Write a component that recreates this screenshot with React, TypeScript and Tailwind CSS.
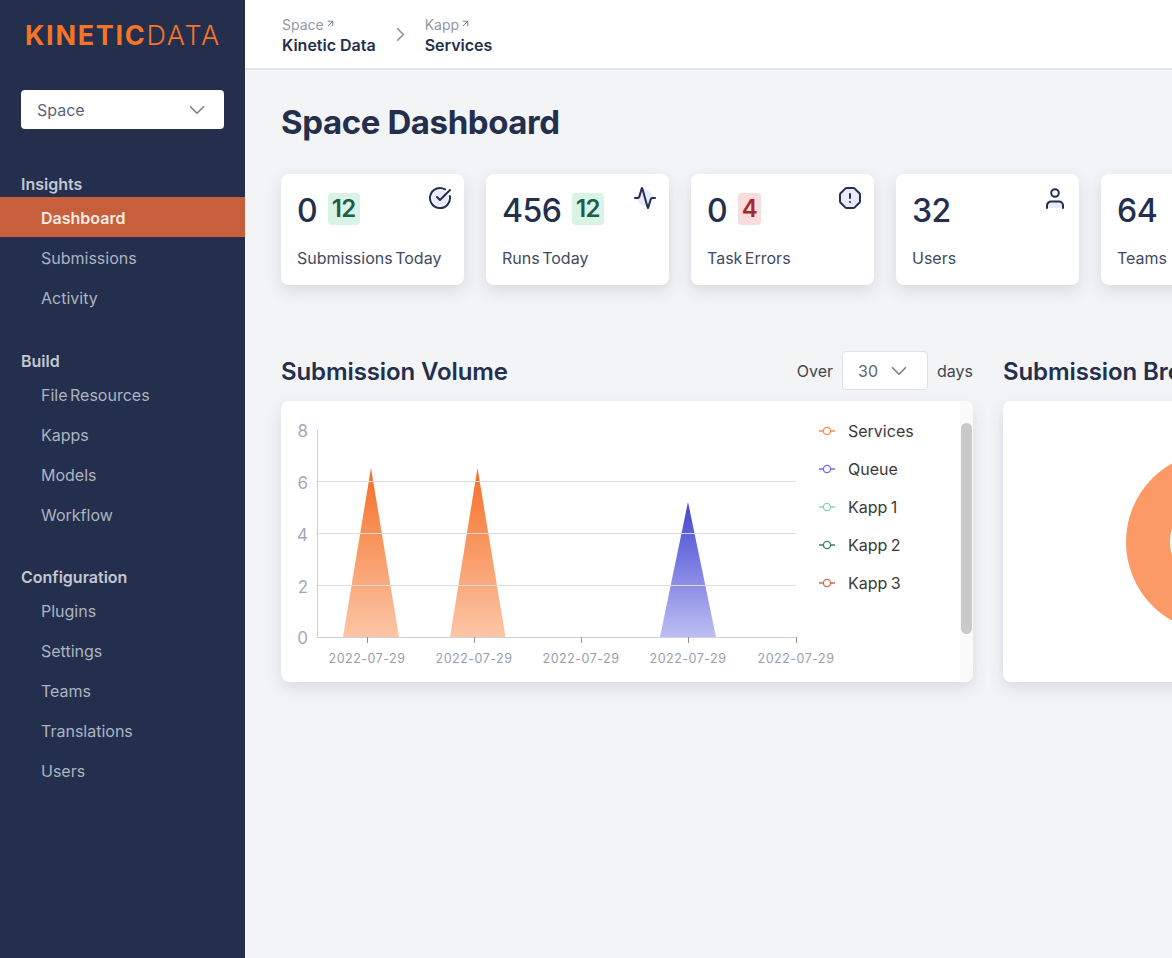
import { Activity, ArrowUpRight, ChevronDown, ChevronRight, CircleCheckBig } from 'lucide-react';
import React from 'react';

const font = "font-['Inter','Liberation_Sans',sans-serif]";

const sections = [
    { title: 'Insights', items: ['Dashboard', 'Submissions', 'Activity'] },
    { title: 'Build', items: ['File Resources', 'Kapps', 'Models', 'Workflow'] },
    { title: 'Configuration', items: ['Plugins', 'Settings', 'Teams', 'Translations', 'Users'] },
];

const legend = [
    { label: 'Services', color: '#fb8a4e' },
    { label: 'Queue', color: '#6a6fe6' },
    { label: 'Kapp 1', color: '#8fd3ae' },
    { label: 'Kapp 2', color: '#3f7d6c' },
    { label: 'Kapp 3', color: '#cf6a4c' },
];

const ticks = [367, 474, 581, 688, 796];

function Sidebar() {
    return (
        <aside className="w-[245px] shrink-0 bg-[#232f4d]">
            <div className="h-[70px] pl-[25px] pt-[20px] text-[27px] leading-[32px] tracking-[1.7px] text-[#f47428]">
                <span className="font-bold">KINETIC</span>
                <span className="font-light">DATA</span>
            </div>
            <div className="mx-[21px] mt-[20px] flex h-[39px] w-[203px] items-center justify-between rounded-[4px] bg-white pl-[16px] pr-[14px] text-[16px] text-[#5b6478]">
                Space
                <ChevronDown size={26} strokeWidth={1.6} className="text-[#7c8494]" />
            </div>
            <nav className="mt-[42px]">
                {sections.map(section => (
                    <div key={section.title} className="mb-[30.5px]">
                        <div className="flex h-[26px] items-center pl-[21px] text-[16px] font-semibold text-[#c3c7d1]">
                            {section.title}
                        </div>
                        {section.items.map(item => (
                            <div
                                key={item}
                                className={
                                    item === 'Dashboard'
                                        ? 'flex h-[40px] items-center bg-[#c85f3c] pl-[41px] pt-[2px] text-[16px] font-semibold text-[#f8ebe5] [word-spacing:-2px]'
                                        : 'flex h-[40px] items-center pl-[41px] pt-[2px] text-[16px] text-[#aeb3c0] [word-spacing:-2px]'
                                }
                            >
                                {item}
                            </div>
                        ))}
                    </div>
                ))}
            </nav>
        </aside>
    );
}

function Crumb({ top, bottom }: { top: string; bottom: string }) {
    return (
        <div>
            <div className="flex items-center gap-[1px] text-[14px] leading-[20px] text-[#9299a8]">
                {top}
                <ArrowUpRight size={11} strokeWidth={2} className="mb-[3px] text-[#6f7686]" />
            </div>
            <div className="text-[16px] font-semibold leading-[20px] text-[#232f4d]">{bottom}</div>
        </div>
    );
}

function Badge({ value, tone }: { value: string; tone: 'green' | 'red' }) {
    return (
        <span
            className={
                tone === 'green'
                    ? '-mt-[4px] flex h-[32px] items-center rounded-[4px] bg-[#d9f4e4] px-[4px] text-[24px] font-semibold tracking-[-0.5px] text-[#1f5c4d]'
                    : '-mt-[4px] flex h-[32px] items-center rounded-[4px] bg-[#f9dcdc] px-[4px] text-[24px] font-semibold text-[#a8262c]'
            }
        >
            {value}
        </span>
    );
}

function Stat({ value, label, badge, icon }: { value: string; label: string; badge?: React.ReactNode; icon: React.ReactNode }) {
    return (
        <div className="relative h-[111px] w-[183px] shrink-0 rounded-[8px] bg-white pl-[16px] pt-[19px] shadow-[0_6px_16px_rgba(35,47,77,0.13)]">
            <div className="flex h-[36px] items-center gap-[10.5px] text-[32px] font-medium tracking-[-0.5px] text-[#232f4d]">
                {value}
                {badge}
            </div>
            <div className="mt-[17px] text-[16px] leading-[24px] text-[#414a63] [word-spacing:-2px]">{label}</div>
            <div className="absolute right-[12px] top-[12px]">{icon}</div>
        </div>
    );
}

function LavenderDot({ children }: { children: React.ReactNode }) {
    return (
        <div className="relative h-[24px] w-[24px] text-[#232f4d]">
            <div className="absolute left-[4px] top-[4px] h-[16px] w-[16px] rounded-full bg-[#e9ebfb]" />
            <div className="relative">{children}</div>
        </div>
    );
}

function OctagonIcon() {
    return (
        <svg width={24} height={24} viewBox="0 0 24 24" className="text-[#232f4d]" fill="none" stroke="currentColor" strokeWidth={2} strokeLinecap="round" strokeLinejoin="round">
            <path
                d="M15.312 2a2 2 0 0 1 1.414.586l4.688 4.688A2 2 0 0 1 22 8.688v6.624a2 2 0 0 1-.586 1.414l-4.688 4.688a2 2 0 0 1-1.414.586H8.688a2 2 0 0 1-1.414-.586l-4.688-4.688A2 2 0 0 1 2 15.312V8.688c0-.53.211-1.039.586-1.414l4.688-4.688A2 2 0 0 1 8.688 2z"
                fill="#e9ebfb"
            />
            <path d="M12 8v4" />
            <path d="M12 16h.01" />
        </svg>
    );
}

function UserIcon() {
    return (
        <svg width={24} height={24} viewBox="0 0 24 24" className="text-[#232f4d]" fill="none" stroke="currentColor" strokeWidth={2} strokeLinecap="round">
            <path d="M4 22v-2.5a4 4 0 0 1 4-4h8a4 4 0 0 1 4 4V22" fill="#e9ebfb" stroke="none" />
            <path d="M4 22v-2.5a4 4 0 0 1 4-4h8a4 4 0 0 1 4 4V22" />
            <circle cx={12} cy={7} r={3.8} />
        </svg>
    );
}

function VolumeChart() {
    return (
        <svg width={530} height={281} viewBox="0 0 530 281" className="shrink-0 overflow-visible">
            <defs>
                <linearGradient id="orange" x1="0" y1="0" x2="0" y2="1">
                    <stop offset="0" stopColor="#f56f25" />
                    <stop offset="1" stopColor="#fcc6a6" />
                </linearGradient>
                <linearGradient id="blue" x1="0" y1="0" x2="0" y2="1">
                    <stop offset="0" stopColor="#4143d2" />
                    <stop offset="1" stopColor="#bcbef2" />
                </linearGradient>
            </defs>
            <polygon points="62,236 90,67 118,236" fill="url(#orange)" />
            <polygon points="169,236 196.5,67 224.5,236" fill="url(#orange)" />
            <polygon points="379,236 407,101 435,236" fill="url(#blue)" />
            {[80.5, 132.5, 184.5].map(y => (
                <line key={y} x1={36} x2={515} y1={y} y2={y} stroke="#dcdcdf" strokeWidth={1} />
            ))}
            <line x1={36.5} x2={36.5} y1={29} y2={236} stroke="#d0d1d6" strokeWidth={1} />
            <line x1={36} x2={515} y1={236.5} y2={236.5} stroke="#d0d1d6" strokeWidth={1} />
            {ticks.map(x => (
                <line key={x} x1={x - 280.5} x2={x - 280.5} y1={236} y2={242} stroke="#8b8f9c" strokeWidth={1} />
            ))}
            {[['8', 30], ['6', 82], ['4', 134], ['2', 186], ['0', 237]].map(([t, y]) => (
                <text key={t} x={27} y={Number(y) + 6} textAnchor="end" fontSize={17} fill="#a5a9b7">
                    {t}
                </text>
            ))}
            {ticks.map(x => (
                <text key={x} x={x - 281} y={262} textAnchor="middle" fontSize={12.5} letterSpacing={0.5} fill="#9a9eac">
                    2022-07-29
                </text>
            ))}
        </svg>
    );
}

export default function App() {
    return (
        <div className={`${font} flex h-[958px] w-[1172px] overflow-hidden bg-[#f3f4f6]`}>
            <Sidebar />
            <main className="min-w-0 flex-1">
                <header className="flex h-[70px] items-center gap-[13px] border-b-2 border-[#e4e5e8] bg-white pl-[37px] pt-[1px]">
                    <Crumb top="Space" bottom="Kinetic Data" />
                    <ChevronRight size={23} strokeWidth={1.8} className="text-[#8d94a3]" />
                    <Crumb top="Kapp" bottom="Services" />
                </header>
                <div className="pl-[36px]">
                    <h1 className="mt-[32px] text-[33px] font-bold leading-[40px] tracking-[-0.4px] text-[#232f4d]">Space Dashboard</h1>
                    <div className="mt-[32px] flex gap-[22px]">
                        <Stat
                            value="0"
                            label="Submissions Today"
                            badge={<Badge value="12" tone="green" />}
                            icon={
                                <LavenderDot>
                                    <CircleCheckBig size={24} strokeWidth={2} />
                                </LavenderDot>
                            }
                        />
                        <Stat
                            value="456"
                            label="Runs Today"
                            badge={<Badge value="12" tone="green" />}
                            icon={
                                <LavenderDot>
                                    <Activity size={24} strokeWidth={2} />
                                </LavenderDot>
                            }
                        />
                        <Stat value="0" label="Task Errors" badge={<Badge value="4" tone="red" />} icon={<OctagonIcon />} />
                        <Stat value="32" label="Users" icon={<UserIcon />} />
                        <Stat value="64" label="Teams" icon={<UserIcon />} />
                    </div>
                    <div className="mt-[66px] flex gap-[30px]">
                        <section className="w-[692px] shrink-0">
                            <div className="flex h-[39px] items-center justify-between">
                                <h2 className="pt-[2px] text-[24px] font-semibold tracking-[-0.1px] text-[#232f4d]">Submission Volume</h2>
                                <div className="flex items-center gap-[9px] text-[16px] text-[#414650]">
                                    Over
                                    <div className="flex h-[39px] w-[86px] items-center gap-[8px] rounded-[4px] border border-[#dfe1e5] bg-white pl-[15px] text-[#5b6478]">
                                        30
                                        <ChevronDown size={26} strokeWidth={1.6} className="text-[#7c8494]" />
                                    </div>
                                    days
                                </div>
                            </div>
                            <div className="mt-[11px] flex h-[281px] overflow-hidden rounded-[8px] bg-white shadow-[0_6px_16px_rgba(35,47,77,0.13)]">
                                <VolumeChart />
                                <ul className="ml-[8px] mt-[11px] flex-1">
                                    {legend.map(item => (
                                        <li key={item.label} className="flex h-[38px] items-center gap-[13px] text-[16px] text-[#3a3a3a] [word-spacing:-1px]">
                                            <svg width={16} height={10} viewBox="0 0 16 10" className="shrink-0">
                                                <line x1={0} x2={16} y1={5} y2={5} stroke={item.color} strokeWidth={1.3} />
                                                <circle cx={8} cy={5} r={3.6} fill="#fff" stroke={item.color} strokeWidth={1.3} />
                                            </svg>
                                            {item.label}
                                        </li>
                                    ))}
                                </ul>
                                <div className="h-full w-[13px] shrink-0 bg-[#fafafa] pt-[22px]">
                                    <div className="ml-[1px] h-[211px] w-[11px] rounded-full bg-[#c9c9c9]" />
                                </div>
                            </div>
                        </section>
                        <section className="w-[400px] shrink-0">
                            <div className="flex h-[39px] items-center">
                                <h2 className="whitespace-nowrap pt-[2px] text-[24px] font-semibold tracking-[-0.1px] text-[#232f4d]">Submission Breakdown</h2>
                            </div>
                            <div className="mt-[11px] flex h-[281px] items-center rounded-[8px] bg-white pl-[123px] shadow-[0_6px_16px_rgba(35,47,77,0.13)]">
                                <svg width={180} height={180} viewBox="0 0 180 180">
                                    <circle cx={90} cy={90} r={68} fill="none" stroke="#fb9a66" strokeWidth={44} />
                                </svg>
                            </div>
                        </section>
                    </div>
                </div>
            </main>
        </div>
    );
}
